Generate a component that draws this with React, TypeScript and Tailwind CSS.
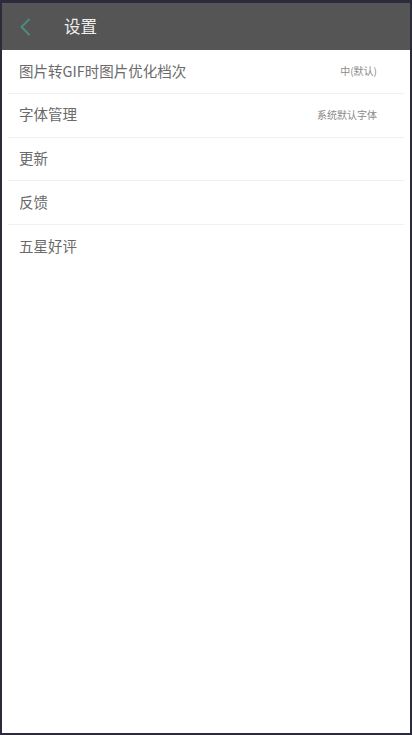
const CJK = '"Noto Sans CJK SC", "Noto Sans", Roboto, sans-serif';

type Item = { label: string; value?: string };

const items: Item[] = [
  { label: "图片转GIF时图片优化档次", value: "中(默认)" },
  { label: "字体管理", value: "系统默认字体" },
  { label: "更新" },
  { label: "反馈" },
  { label: "五星好评" },
];

function BackArrow() {
  return (
    <svg width="12" height="18" viewBox="0 0 12 18" aria-hidden="true">
      <path d="M10 1.5 2.5 9 10 16.5" fill="none" stroke="#4d8a80" strokeWidth="2" strokeLinecap="round" strokeLinejoin="round" />
    </svg>
  );
}

function Row({ item, divider }: { item: Item; divider: boolean }) {
  return (
    <div className={`mx-[6px] flex h-[43.75px] items-center justify-between pb-[2px] pl-[11px] pr-[27px] ${divider ? "border-b border-[#f1f1f1]" : ""}`}>
      <span className="text-[14.5px] text-[#6a6a6a]">{item.label}</span>
      {item.value && <span className="text-[10px] text-[#8a8a8a]">{item.value}</span>}
    </div>
  );
}

export default function App() {
  return (
    <div
      className="flex h-[735px] w-[412px] flex-col overflow-hidden border-t-[3px] border-x-2 border-b-2 border-[#2b2b3b] bg-white"
      style={{ fontFamily: CJK }}
    >
      <header className="flex h-[47px] shrink-0 items-center bg-[#555555]">
        <div className="flex w-[62px] items-center pl-[17px]">
          <BackArrow />
        </div>
        <h1 className="text-[16.5px] text-[#eeeeee]">设置</h1>
      </header>
      <div className="flex flex-col">
        {items.map((item, i) => (
          <Row key={item.label} item={item} divider={i < items.length - 1} />
        ))}
      </div>
    </div>
  );
}
